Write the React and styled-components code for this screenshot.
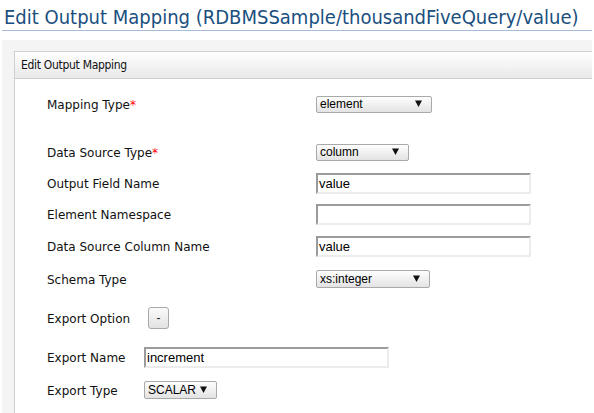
import React from "react";
import styled, { createGlobalStyle } from "styled-components";

const Global = createGlobalStyle`
  html, body { margin: 0; padding: 0; background: #fff; overflow: hidden; }
  body { width: 594px; height: 413px; }
`;

const Page = styled.div`
  padding: 0 0 0 2px;
  width: 592px;
  height: 413px;
  box-sizing: border-box;
  display: flex;
  flex-direction: column;
`;

const Title = styled.h1`
  margin: 0;
  padding: 5px 0 0 2px;
  height: 25px;
  box-sizing: content-box;
  border-bottom: 1px solid #a7bcd9;
  font-family: "DejaVu Sans Condensed", "DejaVu Sans", sans-serif;
  font-weight: normal;
  font-size: 20px;
  line-height: 24px;
  color: #1b4f7e;
  white-space: nowrap;
  overflow: hidden;
`;

const Content = styled.div`
  margin-top: 9px;
  background: #f4f4f4;
  padding: 11px 0 0 12px;
  flex: 1;
  min-height: 0;
  display: flex;
  flex-direction: column;
`;

const Panel = styled.div`
  flex: 1;
  border: 1px solid #cfcfcf;
  border-right: none;
  border-bottom: none;
  background: #fff;
  overflow: hidden;
`;

const PanelHeader = styled.div`
  height: 26px;
  border-bottom: 1px solid #cfcfcf;
  background: linear-gradient(#ffffff, #e9e9e9);
  padding-left: 6px;
  display: flex;
  align-items: center;
  font-family: "DejaVu Sans Condensed", "DejaVu Sans", sans-serif;
  font-size: 12px;
  letter-spacing: -0.3px;
  color: #111;
`;

const PanelBody = styled.div`
  padding: 9px 0 0 32px;
  display: flex;
  flex-direction: column;
`;

const Row = styled.div`
  display: flex;
  align-items: center;
  height: ${(p) => p.$h}px;
`;

const Label = styled.div`
  width: ${(p) => p.$w}px;
  flex: none;
  padding-top: 1px;
  font-family: "DejaVu Sans", Verdana, sans-serif;
  font-size: 12px;
  color: #111;
  white-space: nowrap;
`;

const Required = styled.span`
  color: #f00;
`;

const Select = styled.div`
  box-sizing: border-box;
  width: ${(p) => p.$w}px;
  height: ${(p) => p.$ht || 17}px;
  border: 1px solid #a9a9a9;
  border-radius: 2px;
  background: linear-gradient(#fefefe, #e3e3e3);
  display: flex;
  align-items: center;
  justify-content: space-between;
  padding: 0 9px 0 3px;
  font-family: "Liberation Sans", Arial, sans-serif;
  font-size: 12px;
  color: #000;
`;

const Arrow = () => (
  <svg width="7" height="7" viewBox="0 0 7 7" style={{ marginTop: -2 }}>
    <polygon points="0,0.5 7,0.5 3.5,7" fill="#111" />
  </svg>
);

const Input = styled.div`
  box-sizing: border-box;
  width: ${(p) => p.$w}px;
  height: 21px;
  border-style: solid;
  border-width: 2px;
  border-color: #9b9b9b #ececec #ececec #9b9b9b;
  background: #fff;
  display: flex;
  align-items: center;
  padding-left: 1px;
  font-family: "Liberation Sans", Arial, sans-serif;
  font-size: 13px;
  color: #000;
`;

const Button = styled.div`
  box-sizing: border-box;
  width: 21px;
  height: 22px;
  margin-left: 4px;
  border: 1px solid #a9a9a9;
  border-radius: 3px;
  background: linear-gradient(#fafafa, #e2e2e2);
  display: flex;
  align-items: center;
  justify-content: center;
  font-family: "Liberation Sans", Arial, sans-serif;
  font-size: 12px;
  color: #222;
`;

export default function App() {
  return (
    <>
      <Global />
      <Page>
        <Title>Edit Output Mapping (RDBMSSample/thousandFiveQuery/value)</Title>
        <Content>
          <Panel>
            <PanelHeader>Edit Output Mapping</PanelHeader>
            <PanelBody>
              <Row $h={32}>
                <Label $w={269}>
                  Mapping Type<Required>*</Required>
                </Label>
                <Select $w={116}>
                  <span>element</span>
                  <Arrow />
                </Select>
              </Row>
              <Row $h={16} />
              <Row $h={32}>
                <Label $w={269}>
                  Data Source Type<Required>*</Required>
                </Label>
                <Select $w={93}>
                  <span>column</span>
                  <Arrow />
                </Select>
              </Row>
              <Row $h={31}>
                <Label $w={269}>Output Field Name</Label>
                <Input $w={215}>value</Input>
              </Row>
              <Row $h={31}>
                <Label $w={269}>Element Namespace</Label>
                <Input $w={215} />
              </Row>
              <Row $h={32}>
                <Label $w={269}>Data Source Column Name</Label>
                <Input $w={215}>value</Input>
              </Row>
              <Row $h={34}>
                <Label $w={269}>Schema Type</Label>
                <Select $w={114} $ht={18}>
                  <span>xs:integer</span>
                  <Arrow />
                </Select>
              </Row>
              <Row $h={44}>
                <Label $w={97}>Export Option</Label>
                <Button>-</Button>
              </Row>
              <Row $h={34}>
                <Label $w={97}>Export Name</Label>
                <Input $w={245}>increment</Input>
              </Row>
              <Row $h={32}>
                <Label $w={97}>Export Type</Label>
                <Select $w={73} $ht={18}>
                  <span>SCALAR</span>
                  <Arrow />
                </Select>
              </Row>
            </PanelBody>
          </Panel>
        </Content>
      </Page>
    </>
  );
}
